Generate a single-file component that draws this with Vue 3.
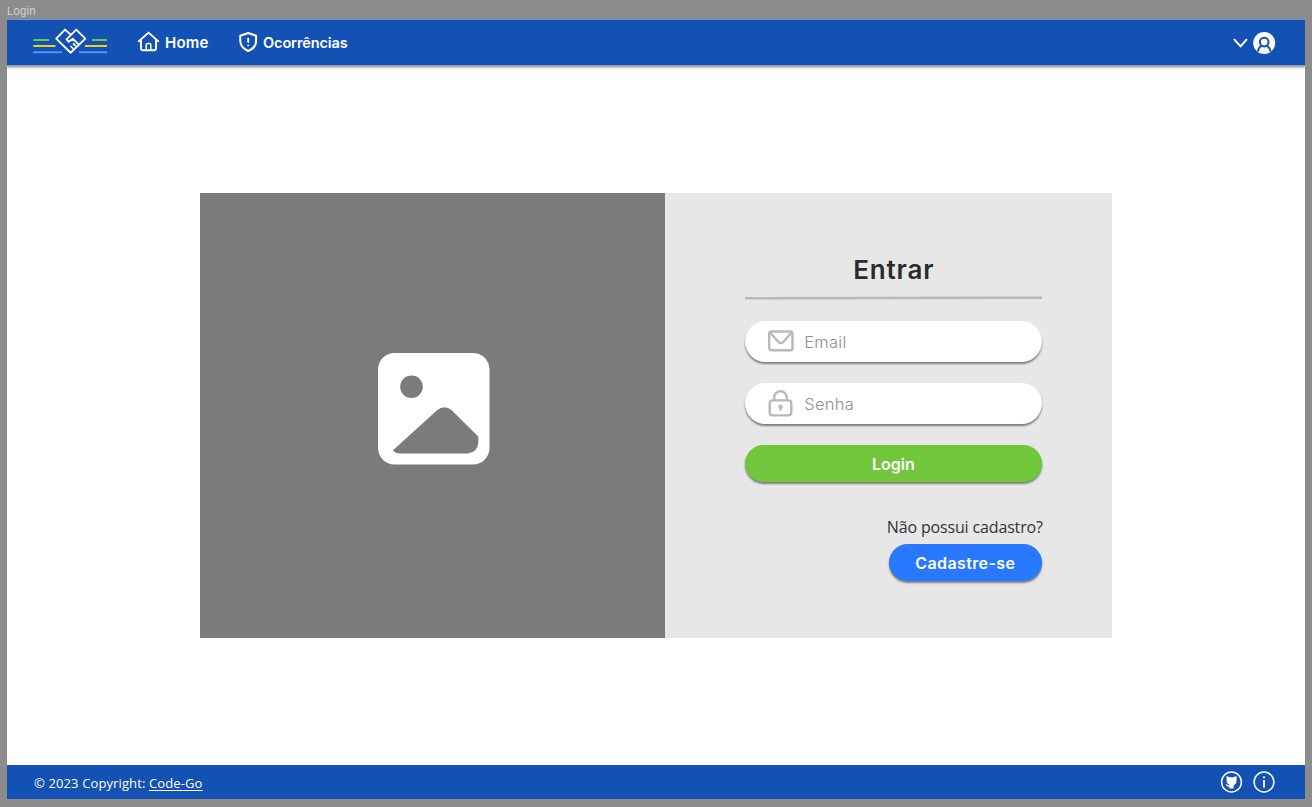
<script setup>
</script>

<template>
  <div class="canvas">
    <div class="frame-label">Login</div>
    <div class="frame">
      <header class="topbar">
        <svg class="logo" width="76" height="30" viewBox="32 26 76 30" fill="none">
          <path d="M33.3 40H49M92 40h15" stroke="#70c73b" stroke-width="2" />
          <path d="M33.3 46H55.5M85 46h22" stroke="#f2cf13" stroke-width="2" />
          <path d="M33.3 52.2H62M79 52.2h28" stroke="#5393ff" stroke-width="2" />
          <path d="M70.600 34.500 65 29.600 56.200 38.600 70.600 52.700 85.300 38.600 76.200 29.600 66.500 39.300l2.200 2.500 4.200-3 5.800 5.800" stroke="#fff" stroke-width="1.900" stroke-linejoin="round" />
          <path d="m73 43.400 2.700 2.700M70.500 46l2.700 2.700" stroke="#fff" stroke-width="1.600" />
        </svg>
        <nav>
          <a class="item home">
            <svg width="24" height="24" viewBox="136 30 24 24" fill="none" stroke="#fff" stroke-width="1.9" stroke-linejoin="round" stroke-linecap="round">
              <path d="m138.8 41.300 9.700-8.700 9.700 8.700M141 40v8.600q0 1.600 1.600 1.600h11.800q1.600 0 1.600-1.600V40" />
              <path d="M146.200 50v-5.300q0-1.300 1.300-1.300h2q1.300 0 1.300 1.300V50" stroke-width="1.500" />
            </svg>
            <span class="home-text">Home</span>
          </a>
          <a class="item occ">
            <svg width="20" height="22" viewBox="238 31 20 22" fill="none" stroke="#fff" stroke-width="2" stroke-linejoin="round" stroke-linecap="round">
              <path d="m248.200 33 7.900 2.700v5.400c0 4.400-3 7.900-7.900 9.900-4.900-2-7.900-5.500-7.900-9.900v-5.400Z" />
              <path d="M248.200 38.300v3.800M248.200 45.300v.1" stroke-width="1.800" />
            </svg>
            <span class="occ-text">Ocorrências</span>
          </a>
        </nav>
        <svg class="account" width="44" height="24" viewBox="1232 31 44 24" fill="none">
          <path d="m1234.500 39.700 6 6.700 6-6.700" stroke="#fff" stroke-width="2" stroke-linecap="round" stroke-linejoin="round" />
          <circle cx="1264.200" cy="43" r="11" fill="#fff" />
          <circle cx="1264.200" cy="42.100" r="4.300" stroke="#1351b4" stroke-width="2" />
          <path d="M1257.900 51.500q.7-4.100 3.700-5.900M1270.500 51.500q-.7-4.100-3.700-5.900" stroke="#1351b4" stroke-width="2" />
        </svg>
      </header>

      <main>
        <section class="card">
          <div class="picture">
            <svg width="112" height="112" viewBox="0 0 112 112">
              <rect width="111.500" height="111.500" rx="16.500" fill="#fff" />
              <circle cx="33.500" cy="33.700" r="11.300" fill="#7b7b7b" />
              <path d="M15 97.300 59 57.200q7.500-5.700 14.700 0L100.300 83.500V90q-1 9.500-10.500 10.500H22q-4.500 0-7-3.200Z" fill="#7b7b7b" />
            </svg>
          </div>
          <form class="form" @submit.prevent>
            <h1><span>Entrar</span></h1>
            <svg class="rule" width="297" height="4" viewBox="0 0 297 4"><path d="M0 2.300 297 1.700" stroke="#bab8b8" stroke-width="2.500" /></svg>
            <div class="field email">
              <svg width="28" height="28" viewBox="0 0 28 28" fill="none" stroke="#bab8b8" stroke-width="2.400" stroke-linejoin="round">
                <rect x="2.200" y="4.500" width="23.300" height="18.800" rx="2.300" />
                <path d="m3 5.500 8.800 9.700q2.100 1.900 4.200 0L24.700 5.500" />
              </svg>
              <span>Email</span>
            </div>
            <div class="field senha">
              <svg width="28" height="28" viewBox="0 0 28 28" fill="none" stroke="#bab8b8" stroke-width="2.400">
                <rect x="2.700" y="11.400" width="21.600" height="15" rx="2.800" />
                <path d="M7.200 11.200V8.500a6.300 6.300 0 0 1 12.600 0v2.700" />
                <circle cx="13.500" cy="17.700" r="2.300" fill="#bab8b8" stroke="none" />
                <path d="M13.500 17.700v4.200" stroke-width="2" />
              </svg>
              <span>Senha</span>
            </div>
            <button class="login"><span>Login</span></button>
            <p class="question"><span>Não possui cadastro?</span></p>
            <button class="signup"><span>Cadastre-se</span></button>
          </form>
        </section>
      </main>

      <footer>
        <p>© 2023 Copyright: <a>Code-Go</a></p>
        <svg width="56" height="24" viewBox="1220 770 56 24" fill="none">
          <circle cx="1231.500" cy="782" r="9.900" stroke="#fff" stroke-width="1.500" />
          <path d="M1226.700 776.200q1.500 0 2.800 1h4q1.300-1 2.900-1 .7 1.800.1 3.100.5 4.500-2.300 5.600-.8.300-.6 1.200v2.400h-4.200v-1.700q-2.500.2-3.300-1.900l-.8-.7q2-.2 3.100 1.300l1-.1q.1-.8-.7-1.100-2.600-1.200-2-5-.6-1.300 0-3.100Z" fill="#fff" />
          <circle cx="1264" cy="782" r="9.900" stroke="#fff" stroke-width="1.500" />
          <circle cx="1264" cy="777.300" r="1.100" fill="#fff" />
          <path d="M1264 780v7.800" stroke="#fff" stroke-width="1.800" />
        </svg>
      </footer>
    </div>
  </div>
</template>

<style>
body { margin: 0; background: #8c8c8c; }
</style>

<style scoped>
* { box-sizing: border-box; }
.canvas { width: 1312px; height: 807px; padding: 0 7px 8px; background: #8c8c8c; font-family: Inter, "Liberation Sans", sans-serif; display: flex; flex-direction: column; overflow: hidden; }
.frame-label { height: 19.400px; padding-top: 4px; line-height: 15px; font-size: 11px; color: #d2d2d2; flex: none; }
.frame { width: 1298px; flex: 1; background: #fff; display: flex; flex-direction: column; }
.topbar { height: 46px; flex: none; background: #1351b4; box-shadow: 0 1px 3px 1px rgba(0, 0, 0, .5); clip-path: inset(0 0 -8px 0); display: flex; align-items: center; padding: 1px 29px 0 25px; color: #fff; }
.logo { flex: none; margin-top: -3px; }
nav { display: flex; align-items: center; flex: 1; }
.item { display: flex; align-items: center; font-weight: 600; white-space: nowrap; }
.home { margin-left: 28px; width: 102px; }
.home svg { margin-right: 5px; margin-top: -1px; }
.occ svg { margin-right: 5px; margin-top: -1px; }
.home-text { font-size: 15px; letter-spacing: .2px; }
.occ-text { font-size: 14.500px; letter-spacing: -.1px; }
main { flex: 1; display: flex; justify-content: center; padding-top: 127.200px; }
.card { width: 912.400px; height: 445px; display: flex; background: #e7e7e7; margin-left: 0; }
.picture { width: 465px; flex: none; background: #7b7b7b; display: flex; align-items: center; justify-content: center; padding: 0 0 13px 3px; }
.form { flex: 1; padding: 60px 70px 0 80px; display: flex; flex-direction: column; }
h1 { margin: 0; height: 34px; line-height: 34px; text-align: center; font-size: 26px; font-weight: 600; letter-spacing: .8px; color: #2b2b2b; }
.rule { display: block; margin: 9.300px 0 0; flex: none; }
.field { width: 297px; height: 40.500px; flex: none; border-radius: 21px; background: #fff; box-shadow: 0 2px 2px rgba(0, 0, 0, .46); display: flex; align-items: center; padding-left: 22.500px; font-size: 16.500px; font-weight: 300; letter-spacing: .25px; color: #8e8e8e; }
.field svg { margin-right: 9px; margin-top: -2px; }
.email { margin-top: 21.500px; }
.senha { margin-top: 21.500px; }
button { border: 0; padding: 0; font-family: inherit; color: #fff; font-weight: 600; box-shadow: 0 2px 2px rgba(0, 0, 0, .46); height: 37px; border-radius: 19px; flex: none; }
.login { width: 297px; margin-top: 21.500px; background: #70c73b; font-size: 16px; }
.question { width: 298px; margin: 33px 0 0; height: 24px; line-height: 24px; text-align: right; font-family: "Open Sans", sans-serif; font-size: 16px; letter-spacing: -.15px; white-space: nowrap; color: #333; }
.signup { width: 153px; margin: 5px 0 0 144px; background: #2879ff; font-size: 16px; letter-spacing: .4px; }
footer { height: 34px; flex: none; background: #1351b4; display: flex; align-items: center; justify-content: space-between; padding: 0 29px 0 27px; color: #fff; }
footer p { margin: 2px 0 0; font-family: "Open Sans", sans-serif; font-size: 13px; letter-spacing: .12px; white-space: nowrap; }
footer a { text-decoration: underline; text-decoration-thickness: 1px; text-underline-offset: 2px; }
</style>
